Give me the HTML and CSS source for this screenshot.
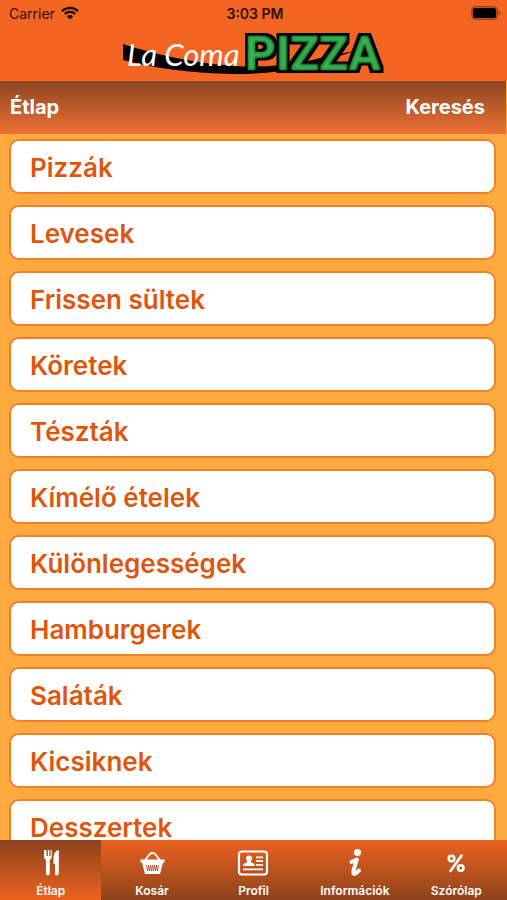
FILE: index.html
```html
<!DOCTYPE html>
<html lang="hu">
<head>
<meta charset="utf-8">
<meta name="viewport" content="width=device-width, initial-scale=1">
<title>La Coma Pizza</title>
<link rel="stylesheet" href="styles.css">
</head>
<body>
<header class="top">
  <div class="status">
    <span class="carrier">Carrier
      <svg class="wifi" viewBox="0 0 18 14" aria-hidden="true"><path d="M1 5.2a11.5 11.5 0 0 1 16 0M3.800 8a7.500 7.500 0 0 1 10.400 0" fill="none" stroke="#1c0b04" stroke-width="2.300"/><path d="M5.800 10.200a4.600 4.600 0 0 1 6.400 0L9 13.500z" fill="#1c0b04"/></svg>
    </span>
    <span class="time">3:03 PM</span>
    <svg class="battery" viewBox="0 0 30 14" aria-hidden="true"><rect x="1" y=".7" width="25" height="12.600" rx="3.500" fill="none" stroke="#9c4218" stroke-width="1.600"/><rect x="2" y="2" width="23" height="10" rx="2" fill="#000"/><path d="M27.500 4.500q2 .8 2 2.500t-2 2.500z" fill="#9c4218"/></svg>
  </div>
  <svg class="logo" viewBox="0 0 264 55" role="img" aria-label="La Coma Pizza">
    <defs>
      <filter id="neon" x="-10%" y="-10%" width="120%" height="120%">
        <feMorphology in="SourceAlpha" operator="dilate" radius="3" result="edge"/>
        <feMorphology in="SourceAlpha" operator="erode" radius="1" result="inner"/>
        <feGaussianBlur in="inner" stdDeviation="1" result="soft"/>
        <feFlood flood-color="#38b453"/>
        <feComposite in2="soft" operator="in" result="core"/>
        <feMerge>
          <feMergeNode in="edge"/>
          <feMergeNode in="SourceGraphic"/>
          <feMergeNode in="core"/>
        </feMerge>
      </filter>
    </defs>
    <path d="M1 18C28 27 70 37 112 40Q150 42 182 36Q208 29 233 25Q205 34 178 42Q148 48 112 48Q50 47 1 34Z" fill="#000"/>
    <text class="logo-script" x="5" y="40">La Coma</text>
    <text class="logo-block" x="123" y="44" filter="url(#neon)">PIZZA</text>
  </svg>
</header>
<div class="toolbar">
  <h1>Étlap</h1>
  <button type="button">Keresés</button>
</div>
<main class="menu">
  <a href="#pizzak">Pizzák</a>
  <a href="#levesek">Levesek</a>
  <a href="#frissen">Frissen sültek</a>
  <a href="#koretek">Köretek</a>
  <a href="#tesztak">Tészták</a>
  <a href="#kimelo">Kímélő ételek</a>
  <a href="#kulonlegessegek">Különlegességek</a>
  <a href="#hamburgerek">Hamburgerek</a>
  <a href="#salatak">Saláták</a>
  <a href="#kicsiknek">Kicsiknek</a>
  <a href="#desszertek">Desszertek</a>
</main>
<nav class="tabs">
  <a class="active" href="#etlap" aria-current="page">
    <svg viewBox="0 0 32 32" aria-hidden="true"><path d="M9 3v7q0 2 2 3v13.500q0 2 1.900 2t1.900-2V13q2-1 2-3V3h-1.200v6h-1.300V3h-1.500v6h-1.300V3zM23.500 3q-5 1.500-5 8v6h1.500v9.500q0 2 1.900 2t1.900-2V4q0-1-.3-1z"/></svg>
    Étlap
  </a>
  <a href="#kosar">
    <svg viewBox="0 0 32 32" aria-hidden="true"><path d="M8.500 14l5.500-7q2.500-2 5 0l5.500 7" fill="none" stroke="#fff" stroke-width="1.800"/><path d="M4.500 12.500h24v3H27l-3 11.500H9L6 15.500H4.500z"/><path d="M10.500 18l1 6 1-6 1 6 1-6 1 6 1-6 1 6 1-6 1 6 1-6 1 6 1-6" fill="none" stroke="#a64c1c" stroke-width=".8"/></svg>
    Kosár
  </a>
  <a href="#profil">
    <svg viewBox="0 0 32 32" aria-hidden="true"><rect x="2" y="4.500" width="28" height="23" rx="3" fill="none" stroke="#fff" stroke-width="2.200"/><path d="M6 19q0-3 4-3.500v-1.500q-1-1-1-3 0-2.500 3-2.500t3 2.500q0 2-1 3v1.500q4 .5 4 3.500zM19 9.500h7v1.700h-7zM19 13.300h7v1.700h-7zM19 17.100h7v1.700h-7zM6 21.500h20v1.800H6z"/></svg>
    Profil
  </a>
  <a href="#informaciok">
    <svg viewBox="0 0 32 32" aria-hidden="true"><circle cx="18.500" cy="5.500" r="3.500"/><path d="M12.500 15l5.300-2.500-3.300 11q-.8 4.500 2 3l3.500-3" fill="none" stroke="#fff" stroke-width="4" stroke-linecap="round" stroke-linejoin="round"/></svg>
    Információk
  </a>
  <a href="#szorolap">
    <svg viewBox="0 0 32 32" aria-hidden="true"><path d="M21.500 8.500L10.500 24" fill="none" stroke="#fff" stroke-width="2.600" stroke-linecap="round"/><g fill="none" stroke="#fff" stroke-width="2.500"><circle cx="11.500" cy="11.500" r="2.800"/><circle cx="20.700" cy="21" r="2.800"/></g></svg>
    Szórólap
  </a>
</nav>
</body>
</html>
```
FILE: styles.css
```css
* {
  box-sizing: border-box;
}

body {
  margin: 0;
  height: 100vh;
  display: flex;
  flex-direction: column;
  overflow: hidden;
  background: #ffa93e;
  font-family: Inter, "Liberation Sans", sans-serif;
}

a {
  color: inherit;
  text-decoration: none;
}

.top {
  flex: none;
  background: #f46523;
}

.status {
  display: grid;
  grid-template-columns: 1fr auto 1fr;
  align-items: center;
  height: 26px;
  padding: 0 6px 0 9px;
  color: #2a1006;
  font-size: 14px;
}

.carrier {
  display: flex;
  align-items: center;
  gap: 6px;
}

.wifi {
  width: 18px;
  height: 14px;
}

.time {
  font-weight: 600;
}

.battery {
  width: 30px;
  height: 14px;
  justify-self: end;
}

.logo {
  display: block;
  width: 264px;
  height: 55px;
  margin: 0 auto;
}

.logo-script {
  fill: #fff;
  font: italic 31px Lato, sans-serif;
}

.logo-block {
  fill: #1d7434;
  font: bold 48px Roboto, sans-serif;
}

.toolbar {
  flex: none;
  display: flex;
  align-items: center;
  justify-content: space-between;
  height: 53px;
  margin-right: 1px;
  padding: 0 21px 2px 10px;
  background: linear-gradient(#8d4521, #ec7136);
  color: #fff;
}

.toolbar h1,
.toolbar button {
  margin: 0;
  padding: 0;
  border: 0;
  background: none;
  color: inherit;
  font: 700 20px/24px Inter, sans-serif;
}

.menu {
  flex: 1;
  min-height: 0;
  display: flex;
  flex-direction: column;
  gap: 11px;
  overflow-y: auto;
  scrollbar-width: none;
  padding: 5px 11px 0 9px;
}

.menu a {
  flex: none;
  height: 55px;
  padding: 0 19px;
  border: 2px solid #ed822c;
  border-radius: 10px;
  background: #fff;
  color: #de560b;
  font-size: 26px;
  font-weight: 600;
  line-height: 53px;
}

.tabs {
  flex: none;
  display: grid;
  grid-template-columns: repeat(5, 1fr);
  height: 60px;
  background: linear-gradient(#ec621f, #8c431c);
  color: #fff;
}

.tabs a {
  display: flex;
  flex-direction: column;
  align-items: center;
  gap: 4px;
  padding-top: 7px;
  font-size: 12px;
  font-weight: 600;
  line-height: 16px;
}

.tabs .active {
  background: linear-gradient(#8c431c, #ec621f);
}

.tabs svg {
  width: 32px;
  height: 32px;
  fill: #fff;
}
```
